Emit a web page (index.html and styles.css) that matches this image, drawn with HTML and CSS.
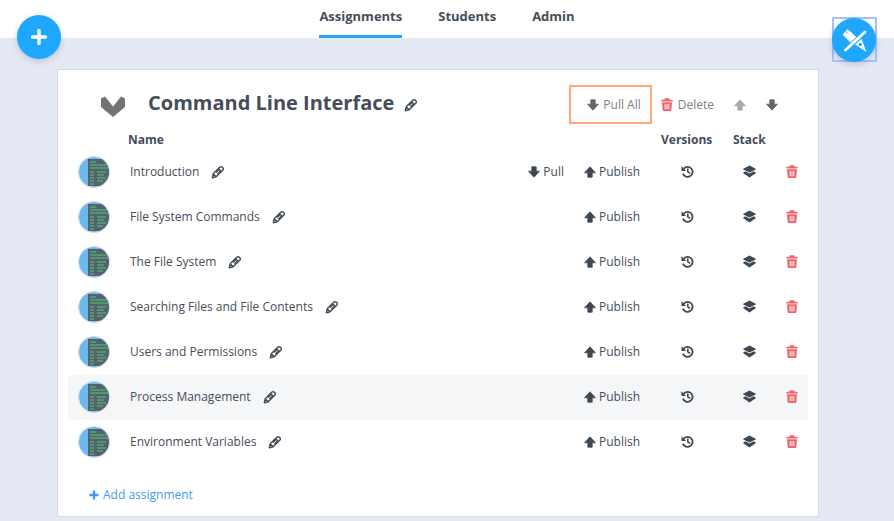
FILE: index.html
```html
<!DOCTYPE html>
<html lang="en">
<head>
<meta charset="utf-8">
<title>Command Line Interface</title>
<link rel="stylesheet" href="styles.css">
</head>
<body>
<svg class="defs" width="0" height="0" aria-hidden="true">
  <defs>
    <symbol id="i-down" viewBox="0 0 12 12"><path d="M3.800 .8h4.400v4.400h3.200L6 11.200.6 5.200h3.200z" fill="currentColor" stroke="currentColor" stroke-width=".8" stroke-linejoin="round"/></symbol>
    <symbol id="i-up" viewBox="0 0 12 12"><path d="M3.800 11.200h4.400V6.800h3.200L6 .8.600 6.800h3.200z" fill="currentColor" stroke="currentColor" stroke-width=".8" stroke-linejoin="round"/></symbol>
    <symbol id="i-pencil" viewBox="0 0 14 14"><path d="M1.300 12.700l.9-3.900 6.500-6.500c.8-.8 2-.8 2.700 0l.3.300c.8.800.8 1.900 0 2.700L5.200 11.800zM2.200 8.800l3 3M7.500 3.600l3 3M5 7.500l2.800-2.800M6.500 9l2.800-2.800" fill="none" stroke="currentColor" stroke-width="1.400" stroke-linejoin="round"/></symbol>
    <symbol id="i-trash" viewBox="0 0 12 13"><path fill="currentColor" fill-rule="evenodd" d="M4 .3h4l.8 1.400h2.400c.3 0 .5.200.5.500v1c0 .2-.2.400-.5.400H.8c-.3 0-.5-.2-.5-.4v-1c0-.3.2-.5.500-.5h2.400zM1 4.300h10l-.6 7.700c0 .5-.5 1-1 1H2.600c-.5 0-1-.5-1-1zM3.700 6v5.200h.9V6zM5.550 6v5.200h.9V6zM7.400 6v5.200h.9V6z"/></symbol>
    <symbol id="i-history" viewBox="0 0 13 13"><path d="M2.600 3.800A5 5 0 1 1 1.900 8.600" fill="none" stroke="currentColor" stroke-width="1.800"/><path d="M.5 1.300v4.600h4.600z" fill="currentColor"/><path d="M6.800 3.600v3.300l2.400 1.500" fill="none" stroke="currentColor" stroke-width="1.600"/></symbol>
    <symbol id="i-stack" viewBox="0 0 13 13"><path fill="currentColor" d="M6.500.5l6.200 3.200c.3.200.3.500 0 .7L6.500 7.600.3 4.400c-.3-.2-.3-.5 0-.7zM2.400 6.300l4.100 2.200 4.100-2.200 2.100 1.200c.3.200.3.500 0 .7l-6.200 4.300L.3 8.200c-.3-.2-.3-.5 0-.7z"/></symbol>
    <clipPath id="avatar-clip"><circle cx="16" cy="16" r="15"/></clipPath>
    <symbol id="i-avatar" viewBox="0 0 32 32">
      <circle cx="16" cy="16" r="15.500" fill="#6cb9ee" stroke="#d6dcec"/>
      <g clip-path="url(#avatar-clip)">
        <rect x="10" y="3" width="22" height="27" fill="#56616e"/>
        <path d="M12 6h6M12 9h18M12 12h18M12 16h4M19 16h9M12 19h4M19 19h7M12 22h4M19 22h9M12 25h4M19 25h6M12 28h4" stroke="#4ccb74" stroke-width="1.200"/>
      </g>
    </symbol>
  </defs>
</svg>

<header class="topbar">
  <nav class="tabs">
    <a class="tab tab-active">Assignments</a>
    <a class="tab">Students</a>
    <a class="tab">Admin</a>
  </nav>
</header>

<button class="fab fab-add" aria-label="Add">
  <svg width="16" height="16" viewBox="0 0 16 16"><path d="M8 1.500v13M1.500 8h13" stroke="#fff" stroke-width="3.400" stroke-linecap="round"/></svg>
</button>
<button class="fab-frame" aria-label="Edit">
  <span class="fab fab-edit">
    <svg width="28" height="28" viewBox="0 0 28 28">
      <path d="M2.500 8.500l5.500-5.500L16.500 11.500l-5.500 5.500z" fill="#fff"/>
      <path d="M5.800 5.700l1.800 1.800M8.200 3.800l1.300 1.300" stroke="#1ea7fd" stroke-width="1"/>
      <path d="M14.500 18l6.500-6.500 5.500 14.500z" fill="#fff"/>
      <circle cx="20.200" cy="18.500" r="1.700" fill="#1ea7fd"/>
      <path d="M4.500 25L26 5.500" stroke="#1ea7fd" stroke-width="4.800"/>
      <path d="M5.500 24L25 6" stroke="#fff" stroke-width="2.800" stroke-linecap="round"/>
    </svg>
  </span>
</button>

<main class="page">
  <section class="card">
    <div class="card-head">
      <svg class="chevron" width="26" height="21" viewBox="0 0 26 21"><path d="M1 2.500L5 .5l8 10 8-10 4 2V11L13 21 1 11z" fill="#737373"/></svg>
      <h1 class="title">Command Line Interface</h1>
      <svg class="ico pencil title-pencil"><use href="#i-pencil"/></svg>
      <div class="head-actions">
        <button class="action action-pull"><svg class="ico-s"><use href="#i-down"/></svg>Pull All</button>
        <button class="action action-delete"><svg class="ico-trash"><use href="#i-trash"/></svg><span>Delete</span></button>
        <button class="move move-up" aria-label="Move up"><svg class="ico-s"><use href="#i-up"/></svg></button>
        <button class="move" aria-label="Move down"><svg class="ico-s"><use href="#i-down"/></svg></button>
      </div>
    </div>

    <div class="col-heads">
      <span class="col-name">Name</span>
      <span class="col-versions">Versions</span>
      <span class="col-stack">Stack</span>
    </div>

    <ul class="rows">
      <li class="row">
        <svg class="avatar"><use href="#i-avatar"/></svg>
        <span class="name">Introduction</span><svg class="ico pencil"><use href="#i-pencil"/></svg>
        <span class="pull"><svg class="ico-m"><use href="#i-down"/></svg>Pull</span>
        <span class="publish"><svg class="ico-m"><use href="#i-up"/></svg>Publish</span>
        <span class="cell-v"><svg class="ico-h"><use href="#i-history"/></svg></span>
        <span class="cell-s"><svg class="ico-l"><use href="#i-stack"/></svg></span>
        <span class="cell-t"><svg class="ico-trash"><use href="#i-trash"/></svg></span>
      </li>
      <li class="row">
        <svg class="avatar"><use href="#i-avatar"/></svg>
        <span class="name">File System Commands</span><svg class="ico pencil"><use href="#i-pencil"/></svg>
        <span class="pull"></span>
        <span class="publish"><svg class="ico-m"><use href="#i-up"/></svg>Publish</span>
        <span class="cell-v"><svg class="ico-h"><use href="#i-history"/></svg></span>
        <span class="cell-s"><svg class="ico-l"><use href="#i-stack"/></svg></span>
        <span class="cell-t"><svg class="ico-trash"><use href="#i-trash"/></svg></span>
      </li>
      <li class="row">
        <svg class="avatar"><use href="#i-avatar"/></svg>
        <span class="name">The File System</span><svg class="ico pencil"><use href="#i-pencil"/></svg>
        <span class="pull"></span>
        <span class="publish"><svg class="ico-m"><use href="#i-up"/></svg>Publish</span>
        <span class="cell-v"><svg class="ico-h"><use href="#i-history"/></svg></span>
        <span class="cell-s"><svg class="ico-l"><use href="#i-stack"/></svg></span>
        <span class="cell-t"><svg class="ico-trash"><use href="#i-trash"/></svg></span>
      </li>
      <li class="row">
        <svg class="avatar"><use href="#i-avatar"/></svg>
        <span class="name">Searching Files and File Contents</span><svg class="ico pencil"><use href="#i-pencil"/></svg>
        <span class="pull"></span>
        <span class="publish"><svg class="ico-m"><use href="#i-up"/></svg>Publish</span>
        <span class="cell-v"><svg class="ico-h"><use href="#i-history"/></svg></span>
        <span class="cell-s"><svg class="ico-l"><use href="#i-stack"/></svg></span>
        <span class="cell-t"><svg class="ico-trash"><use href="#i-trash"/></svg></span>
      </li>
      <li class="row">
        <svg class="avatar"><use href="#i-avatar"/></svg>
        <span class="name">Users and Permissions</span><svg class="ico pencil"><use href="#i-pencil"/></svg>
        <span class="pull"></span>
        <span class="publish"><svg class="ico-m"><use href="#i-up"/></svg>Publish</span>
        <span class="cell-v"><svg class="ico-h"><use href="#i-history"/></svg></span>
        <span class="cell-s"><svg class="ico-l"><use href="#i-stack"/></svg></span>
        <span class="cell-t"><svg class="ico-trash"><use href="#i-trash"/></svg></span>
      </li>
      <li class="row row-hover">
        <svg class="avatar"><use href="#i-avatar"/></svg>
        <span class="name">Process Management</span><svg class="ico pencil"><use href="#i-pencil"/></svg>
        <span class="pull"></span>
        <span class="publish"><svg class="ico-m"><use href="#i-up"/></svg>Publish</span>
        <span class="cell-v"><svg class="ico-h"><use href="#i-history"/></svg></span>
        <span class="cell-s"><svg class="ico-l"><use href="#i-stack"/></svg></span>
        <span class="cell-t"><svg class="ico-trash"><use href="#i-trash"/></svg></span>
      </li>
      <li class="row">
        <svg class="avatar"><use href="#i-avatar"/></svg>
        <span class="name">Environment Variables</span><svg class="ico pencil"><use href="#i-pencil"/></svg>
        <span class="pull"></span>
        <span class="publish"><svg class="ico-m"><use href="#i-up"/></svg>Publish</span>
        <span class="cell-v"><svg class="ico-h"><use href="#i-history"/></svg></span>
        <span class="cell-s"><svg class="ico-l"><use href="#i-stack"/></svg></span>
        <span class="cell-t"><svg class="ico-trash"><use href="#i-trash"/></svg></span>
      </li>
    </ul>

    <a class="add-link">
      <svg width="10" height="10" viewBox="0 0 10 10"><path d="M5 .5v9M.5 5h9" stroke="currentColor" stroke-width="2.400"/></svg>
      Add assignment
    </a>
  </section>
</main>
</body>
</html>
```

FILE: styles.css
```css
* { box-sizing: border-box; }
html, body { margin: 0; padding: 0; height: 100%; }
body {
  background: #e4e9f4;
  font-family: "Open Sans", sans-serif;
  color: #454d59;
  overflow: hidden;
  position: relative;
}
.defs { position: absolute; }
button { font: inherit; background: none; border: 0; padding: 0; }

.topbar { height: 38px; background: #fff; display: flex; justify-content: center; }
.tabs { display: flex; gap: 36px; height: 38px; }
.tab {
  font-size: 13px;
  font-weight: 700;
  line-height: 33px;
  color: #454d59;
  height: 38px;
  border-bottom: 3px solid transparent;
}
.tab-active { border-bottom-color: #2aa6ee; }

.fab {
  width: 44px;
  height: 44px;
  border-radius: 50%;
  background: #1ea7fd;
  box-shadow: 0 2px 6px rgba(60, 70, 100, .25);
  display: flex;
  align-items: center;
  justify-content: center;
}
.fab-add { position: absolute; left: 17px; top: 15px; }
.fab-frame {
  position: absolute;
  left: 832px;
  top: 17px;
  width: 45px;
  height: 45px;
  border: 2px solid #a3c2ff;
  border-radius: 1px;
}
.fab-edit { margin: -1px 0 0 -2px; }

.page { padding: 31px 75px 0 57px; }
.card {
  background: #fff;
  border: 1px solid #d3d9e8;
  height: 448px;
  width: 762px;
  padding: 15px 10px 0;
}

.card-head { display: flex; align-items: center; height: 39px; padding-left: 32px; }
.chevron { margin-top: 4px; }
.title {
  margin: 0 0 4px 22px;
  font-size: 20px;
  font-weight: 700;
  color: #454d59;
  line-height: 39px;
  white-space: nowrap;
}
.ico { width: 14px; height: 14px; flex: none; }
.pencil { color: #454d59; margin-left: 12px; }
.title-pencil { margin-left: 10px; }
.head-actions { margin-left: auto; display: flex; align-items: center; height: 39px; margin-right: 30px; }
.action { font-size: 12px; color: #7b7f86; display: flex; align-items: center; height: 39px; }
.action-pull { width: 83px; border: 2px solid #ffa97d; justify-content: flex-end; padding-right: 9px; gap: 4px; }
.action-delete { margin-left: 9px; gap: 5px; }
.move { width: 12px; height: 12px; margin-left: 20px; display: flex; }
.ico-s { width: 12px; height: 12px; color: #666; flex: none; }
.move-up .ico-s { color: #aaa; }
.ico-trash { width: 12px; height: 13px; flex: none; color: #ec686d; }

.col-heads { height: 26px; display: flex; font-size: 12px; font-weight: 700; line-height: 17px; color: #454d59; padding: 7px 0 0 60px; }
.col-name { flex: none; }
.col-versions { margin-left: auto; width: 72px; }
.col-stack { width: 75px; }

.rows { list-style: none; margin: 0; padding: 0; }
.row { display: flex; align-items: center; height: 45px; padding: 0 0 2px 10px; font-size: 12px; color: #454d59; }
.row-hover { background: #f5f6f8; }
.avatar { width: 32px; height: 32px; flex: none; margin-right: 20px; }
.pull { margin-left: auto; display: flex; align-items: center; gap: 3px; width: 36px; white-space: nowrap; justify-content: flex-end; }
.publish { margin-left: 20px; display: flex; align-items: center; gap: 3px; white-space: nowrap; width: 56px; }
.ico-m { width: 12px; height: 12px; color: #3f4753; flex: none; }
.cell-v, .cell-s, .cell-t { display: flex; justify-content: center; align-items: center; flex: none; }
.cell-v { width: 62px; margin-left: 16px; }
.cell-s { width: 62px; }
.cell-t { width: 24px; margin-right: 4px; }
.ico-h { width: 13px; height: 13px; color: #3f4753; }
.ico-l { width: 13px; height: 13px; color: #3f4753; }

.add-link {
  display: flex;
  align-items: center;
  gap: 4px;
  margin: 20px 0 0 21px;
  font-size: 12px;
  color: #3f9cf0;
  line-height: 20px;
}
```
